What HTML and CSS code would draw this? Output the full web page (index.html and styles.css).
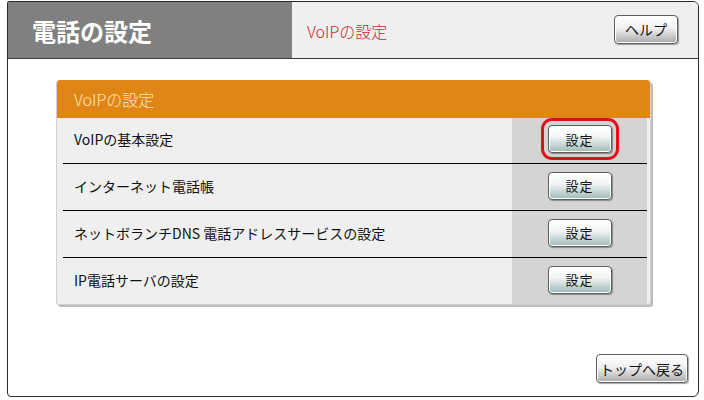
FILE: index.html
```html
<!DOCTYPE html>
<html lang="ja">
<head>
<meta charset="UTF-8">
<meta name="viewport" content="width=device-width, initial-scale=1.0">
<title>電話の設定</title>
<link rel="stylesheet" href="styles.css">
</head>
<body>
  <div class="frame">
    <div class="header">
      <div class="header-title">電話の設定</div>
      <div class="header-sub">
        <span class="sub-title">VoIPの設定</span>
        <button class="btn btn-help">ヘルプ</button>
      </div>
    </div>

    <div class="panel">
      <div class="panel-head">VoIPの設定</div>
      <div class="panel-list">
        <div class="row">
          <div class="row-label">VoIPの基本設定</div>
          <div class="row-cell"><button class="btn btn-set is-focus">設定</button></div>
        </div>
        <div class="row">
          <div class="row-label">インターネット電話帳</div>
          <div class="row-cell"><button class="btn btn-set">設定</button></div>
        </div>
        <div class="row">
          <div class="row-label">ネットボランチDNS 電話アドレスサービスの設定</div>
          <div class="row-cell"><button class="btn btn-set">設定</button></div>
        </div>
        <div class="row">
          <div class="row-label">IP電話サーバの設定</div>
          <div class="row-cell"><button class="btn btn-set">設定</button></div>
        </div>
      </div>
    </div>

    <div class="footer">
      <button class="btn btn-back">トップへ戻る</button>
    </div>
  </div>
</body>
</html>
```

FILE: styles.css
```css
body {
  margin: 0;
  background: #fff;
  font-family: "Noto Sans CJK JP", "Noto Sans", sans-serif;
  color: #111;
}
.frame {
  box-sizing: border-box;
  width: 692px;
  height: 396px;
  margin: 1px 0 0 7px;
  border: 1px solid #2b2b24;
  border-radius: 2px 6px 6px 4px;
  display: flex;
  flex-direction: column;
  overflow: hidden;
}
.header {
  display: flex;
  height: 56px;
  border-bottom: 1px solid #3a3a34;
  flex-shrink: 0;
}
.header-title {
  width: 284px;
  background: #808080;
  color: #fff;
  font-size: 24px;
  font-weight: bold;
  line-height: 56px;
  padding-left: 24px;
  box-sizing: border-box;
  padding-top: 1px;
}
.header-sub {
  flex: 1;
  background: #efefef;
  display: flex;
  align-items: center;
  justify-content: space-between;
  padding: 0 20px 0 15px;
}
.sub-title {
  color: #c8282c;
  font-size: 16px;
  font-weight: 300;
  padding-top: 2px;
}
.btn {
  font-family: "Noto Sans CJK JP", "Noto Sans", sans-serif;
  color: #111;
  border: 1px solid #5e5e5e;
  border-radius: 4px;
  box-shadow: inset 0 0 0 1px #fff, 1px 1px 1px rgba(0, 0, 0, 0.35);
  padding: 0;
  cursor: pointer;
}
.btn-help {
  width: 64px;
  height: 29px;
  font-size: 14px;
  background: linear-gradient(#ffffff, #f1f1f1 45%, #a9a9a9);
  margin-bottom: 2px;
}
.panel {
  width: 593px;
  margin: 21px 0 0 48px;
  border: 1px solid #d0d0d0;
  border-top: none;
  border-radius: 4px 4px 3px 3px;
  box-shadow: 2px 2px 0 #bdbdbd;
  background: #efefef;
  overflow: hidden;
}
.panel-head {
  height: 38px;
  background: #e08617;
  color: #fde6b4;
  font-size: 16px;
  font-weight: 300;
  line-height: 38px;
  padding-left: 17px;
}
.panel-list {
  padding: 0 3px 0 6px;
}
.row {
  display: flex;
  height: 47px;
  border-top: 1px solid #000;
  box-sizing: border-box;
}
.row:first-child {
  height: 45px;
  border-top: none;
}
.row-label {
  flex: 1;
  display: flex;
  align-items: center;
  padding: 0 0 3px 11px;
  font-size: 14px;
}
.row-cell {
  width: 135px;
  background: #d4d4d4;
  display: flex;
  align-items: center;
  justify-content: center;
}
.btn-set {
  width: 64px;
  height: 28px;
  font-size: 13px;
  letter-spacing: 1px;
  background: linear-gradient(#ffffff, #f3f6f6 40%, #9fbab7);
  margin-bottom: 3px;
}
.btn-set.is-focus {
  outline: 3px solid #e0101a;
  outline-offset: 4px;
}
.footer {
  margin-top: auto;
  display: flex;
  justify-content: flex-end;
  padding: 0 10px 13px 0;
}
.btn-back {
  width: 92px;
  height: 29px;
  font-size: 14px;
  background: linear-gradient(#ffffff, #f1f1f1 45%, #a9a9a9);
}
```
